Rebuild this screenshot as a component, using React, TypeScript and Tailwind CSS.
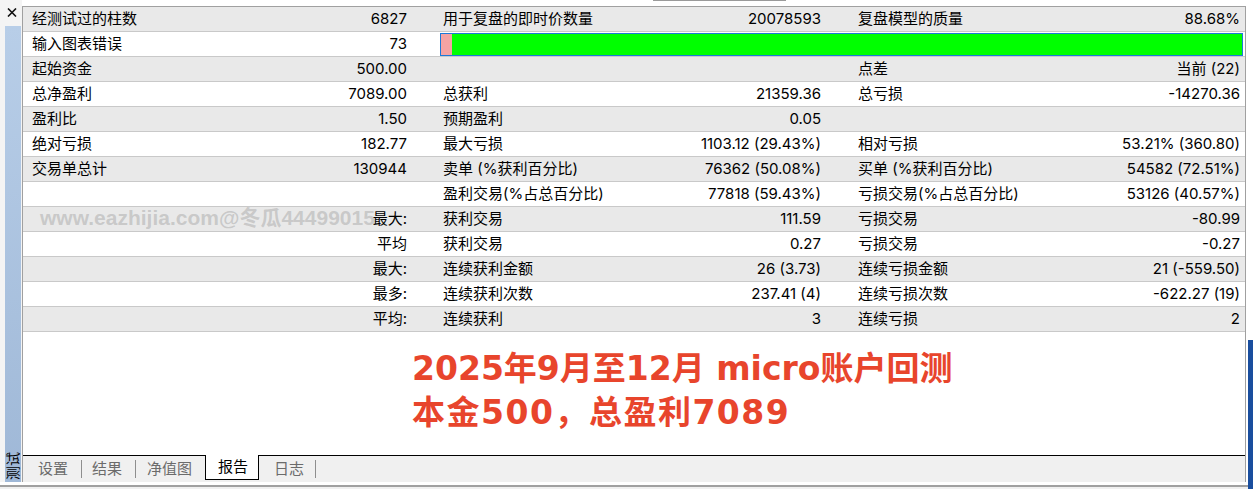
import React from "react";

type Row = [string, string, string, string, string, string];

const rows: Row[] = [
  ["经测试过的柱数", "6827", "用于复盘的即时价数量", "20078593", "复盘模型的质量", "88.68%"],
  ["输入图表错误", "73", "", "", "", ""],
  ["起始资金", "500.00", "", "", "点差", "当前 (22)"],
  ["总净盈利", "7089.00", "总获利", "21359.36", "总亏损", "-14270.36"],
  ["盈利比", "1.50", "预期盈利", "0.05", "", ""],
  ["绝对亏损", "182.77", "最大亏损", "1103.12 (29.43%)", "相对亏损", "53.21% (360.80)"],
  ["交易单总计", "130944", "卖单 (%获利百分比)", "76362 (50.08%)", "买单 (%获利百分比)", "54582 (72.51%)"],
  ["", "", "盈利交易(%占总百分比)", "77818 (59.43%)", "亏损交易(%占总百分比)", "53126 (40.57%)"],
  ["", "最大:", "获利交易", "111.59", "亏损交易", "-80.99"],
  ["", "平均", "获利交易", "0.27", "亏损交易", "-0.27"],
  ["", "最大:", "连续获利金额", "26 (3.73)", "连续亏损金额", "21 (-559.50)"],
  ["", "最多:", "连续获利次数", "237.41 (4)", "连续亏损次数", "-622.27 (19)"],
  ["", "平均:", "连续获利", "3", "连续亏损", "2"],
];

function QualityBar() {
  return (
    <div className="ml-[27px] mr-[2px] flex h-[23px] flex-1 self-center border border-[#1c7ad8] bg-[#00ff00]">
      <div className="w-[11px] bg-[#f4a3a3]" />
    </div>
  );
}

function ReportRow({ row, index }: { row: Row; index: number }) {
  const [l1, v1, l2, v2, l3, v3] = row;
  const rowBg = index % 2 === 0 ? "bg-[#e9e9e9]" : "bg-white";
  return (
    <div className={`flex h-[25px] border-b border-[#c9c9c9] ${rowBg}`}>
      <div className="flex w-[390px] items-center justify-between pl-[9px] pr-[6px]">
        <span>{l1}</span>
        <span>{v1}</span>
      </div>
      {index === 1 ? (
        <QualityBar />
      ) : (
        <>
          <div className="flex w-[416px] items-center justify-between pl-[30px] pr-[8px]">
            <span>{l2}</span>
            <span>{v2}</span>
          </div>
          <div className="flex flex-1 items-center justify-between pl-[29px] pr-[5px]">
            <span>{l3}</span>
            <span>{v3}</span>
          </div>
        </>
      )}
    </div>
  );
}

function TabBar() {
  return (
    <div className="flex h-[27px] items-start border-t border-black bg-[#f0f0f0] text-[15px] text-[#6b6b6b]">
      <span className="ml-[15px] mt-px flex h-[24px] items-center">设置</span>
      <span className="ml-[13px] mt-[4px] h-[18px] w-px bg-[#8e8e8e]" />
      <span className="ml-[10px] mt-px flex h-[24px] items-center">结果</span>
      <span className="ml-[13px] mt-[4px] h-[18px] w-px bg-[#8e8e8e]" />
      <span className="ml-[11px] mt-px flex h-[24px] items-center">净值图</span>
      <span className="ml-[13px] -mt-px flex h-[25px] items-center border-x border-b border-black bg-white pl-[12px] pr-[10px] pt-px text-black">
        报告
      </span>
      <span className="ml-[15px] mt-px flex h-[24px] items-center">日志</span>
      <span className="ml-[11px] mt-[4px] h-[18px] w-px bg-[#8e8e8e]" />
    </div>
  );
}

export default function App() {
  return (
    <div className="relative flex h-[489px] w-[1253px] overflow-hidden bg-[#f6f6f6] font-['Inter','Noto_Sans_CJK_SC',sans-serif] text-[15px] text-black">
      <div className="flex w-[1248px] flex-col">
        <div className="flex h-[482px]">
          {/* side dock strip */}
          <div className="flex w-[22px] flex-col bg-[#f4f4f4]">
            <div className="h-[26px] pl-[7px] pt-[8px]">
              <svg width="10" height="9" viewBox="0 0 10 9">
                <path d="M1 0.5 L9 8.5 M9 0.5 L1 8.5" stroke="#111" strokeWidth="1.6" fill="none" />
              </svg>
            </div>
            <div className="ml-[5px] mr-px flex flex-1 flex-col items-center justify-end bg-gradient-to-b from-[#b8cee8] to-[#9fb8d7] pb-[2px]">
              <span className="rotate-180 text-[14px] leading-[14px] text-black [text-orientation:sideways] [writing-mode:vertical-rl]">
                测试
              </span>
            </div>
          </div>

          {/* report panel */}
          <div className="flex w-[1224px] flex-col">
            <div className="flex h-[6px] bg-white">
              <div className="ml-[631px] h-px w-[133px] bg-[#9a9a9a]" />
            </div>
            <div className="flex flex-1 flex-col border-x border-t border-[#a0a0a0] bg-white">
              {rows.map((row, i) => (
                <ReportRow key={i} row={row} index={i} />
              ))}
              <div className="flex-1 bg-white pl-[389px] pt-[15px] font-['DejaVu_Sans','Noto_Sans_CJK_SC',sans-serif] text-[33px] font-bold leading-[44px] text-[#e8452c]">
                <div>2025年9月至12月 micro账户回测</div>
                <div className="tracking-[1.5px]">本金500，总盈利7089</div>
              </div>
              <TabBar />
            </div>
          </div>
          <div className="w-[2px] bg-white" />
        </div>
        <div className="h-[3px] bg-white" />
        <div className="h-[2px] bg-[#a0a0a0]" />
        <div className="flex-1 bg-[#f0f0f0]" />
      </div>

      {/* window edge */}
      <div className="flex w-[5px] flex-col">
        <div className="h-[340px] bg-white" />
        <div className="flex-1 bg-[#1a4e9e]" />
      </div>

      <div className="absolute left-[40px] top-[206px] font-['Liberation_Sans','Noto_Sans_CJK_SC',sans-serif] text-[21px] font-bold leading-[24px] text-[rgba(150,150,150,0.4)]">
        www.eazhijia.com@冬瓜44499015
      </div>
    </div>
  );
}
